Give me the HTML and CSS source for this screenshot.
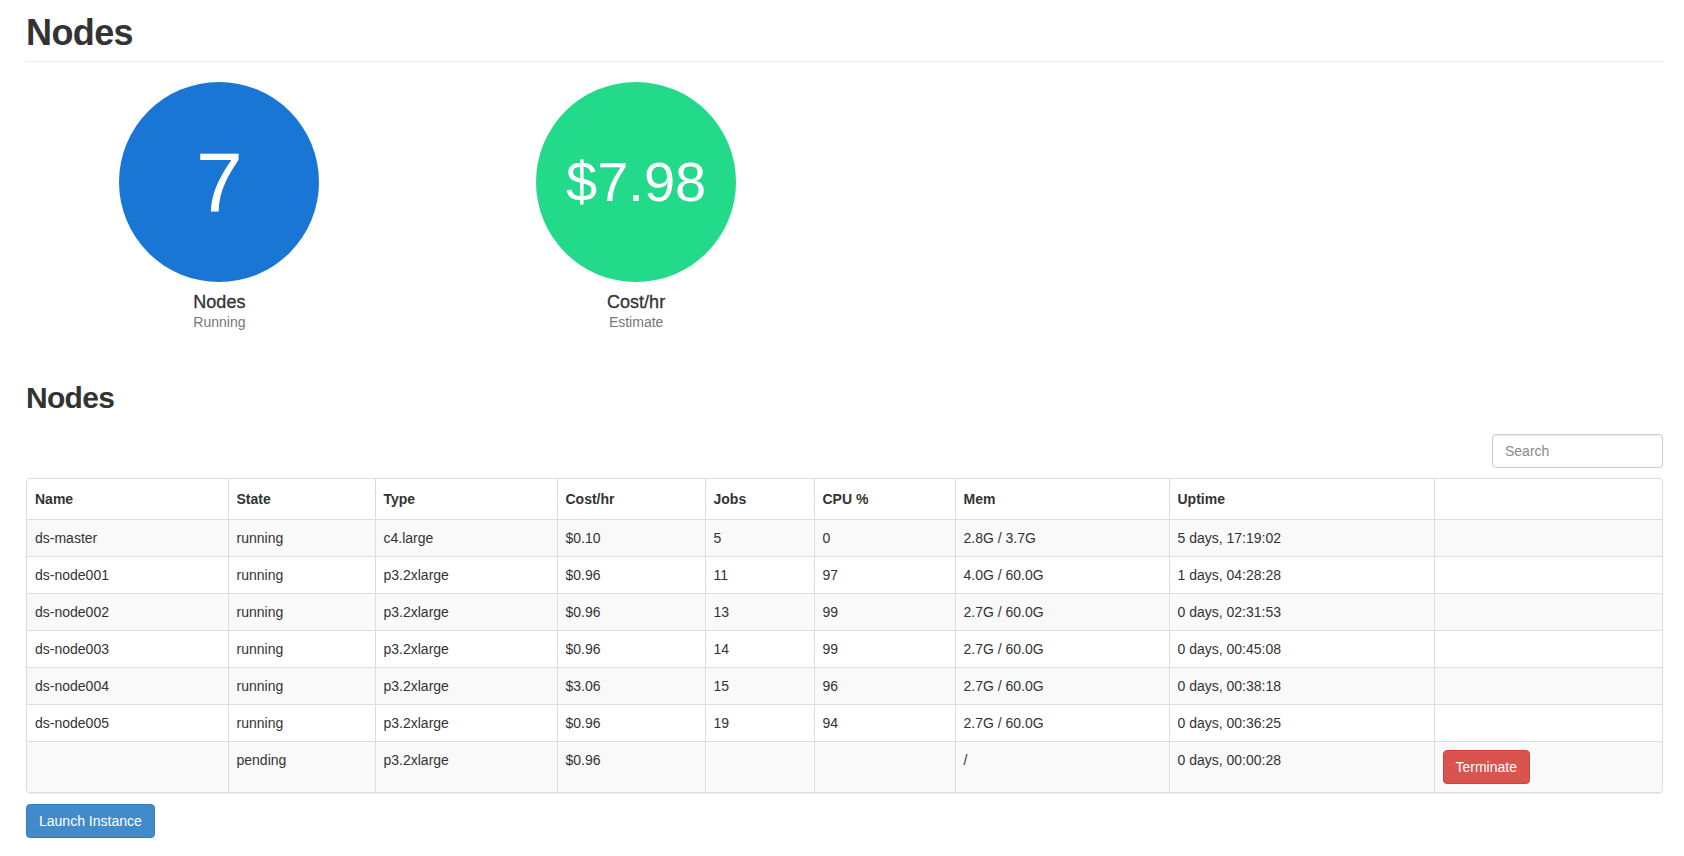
FILE: index.html
```html
<!DOCTYPE html>
<html lang="en">
<head>
<meta charset="utf-8">
<title>Nodes</title>
<link rel="stylesheet" href="styles.css">
</head>
<body>
<div class="page">
  <div class="page-header">
    <h1 class="page-title">Nodes</h1>
  </div>

  <div class="stats">
    <div class="stat">
      <div class="stat-circle stat-blue"><span class="stat-value stat-value-lg">7</span></div>
      <div class="stat-label">Nodes</div>
      <div class="stat-sub">Running</div>
    </div>
    <div class="stat">
      <div class="stat-circle stat-green"><span class="stat-value stat-value-md">$7.98</span></div>
      <div class="stat-label">Cost/hr</div>
      <div class="stat-sub">Estimate</div>
    </div>
  </div>

  <h2 class="section-title">Nodes</h2>

  <div class="toolbar">
    <input class="search" type="text" placeholder="Search">
  </div>

  <div class="table-wrap">
    <table class="nodes">
      <colgroup>
        <col class="c-name"><col class="c-state"><col class="c-type"><col class="c-cost"><col class="c-jobs"><col class="c-cpu"><col class="c-mem"><col class="c-uptime"><col class="c-action">
      </colgroup>
      <thead>
        <tr><th>Name</th><th>State</th><th>Type</th><th>Cost/hr</th><th>Jobs</th><th>CPU %</th><th>Mem</th><th>Uptime</th><th></th></tr>
      </thead>
      <tbody>
        <tr><td>ds-master</td><td>running</td><td>c4.large</td><td>$0.10</td><td>5</td><td>0</td><td>2.8G / 3.7G</td><td>5 days, 17:19:02</td><td></td></tr>
        <tr><td>ds-node001</td><td>running</td><td>p3.2xlarge</td><td>$0.96</td><td>11</td><td>97</td><td>4.0G / 60.0G</td><td>1 days, 04:28:28</td><td></td></tr>
        <tr><td>ds-node002</td><td>running</td><td>p3.2xlarge</td><td>$0.96</td><td>13</td><td>99</td><td>2.7G / 60.0G</td><td>0 days, 02:31:53</td><td></td></tr>
        <tr><td>ds-node003</td><td>running</td><td>p3.2xlarge</td><td>$0.96</td><td>14</td><td>99</td><td>2.7G / 60.0G</td><td>0 days, 00:45:08</td><td></td></tr>
        <tr><td>ds-node004</td><td>running</td><td>p3.2xlarge</td><td>$3.06</td><td>15</td><td>96</td><td>2.7G / 60.0G</td><td>0 days, 00:38:18</td><td></td></tr>
        <tr><td>ds-node005</td><td>running</td><td>p3.2xlarge</td><td>$0.96</td><td>19</td><td>94</td><td>2.7G / 60.0G</td><td>0 days, 00:36:25</td><td></td></tr>
        <tr><td></td><td>pending</td><td>p3.2xlarge</td><td>$0.96</td><td></td><td></td><td>/</td><td>0 days, 00:00:28</td><td><button class="btn btn-danger" type="button">Terminate</button></td></tr>
      </tbody>
    </table>
  </div>

  <button class="btn btn-primary launch" type="button">Launch Instance</button>
</div>
</body>
</html>
```

FILE: styles.css
```css
html, body {
  margin: 0;
  padding: 0;
  background: #fff;
}

body {
  font-family: "Liberation Sans", Helvetica, Arial, sans-serif;
  font-size: 14px;
  line-height: 20px;
  color: #333;
}

.page {
  padding: 0 21px 30px 26px;
}

.page-header {
  padding: 13px 0 8px;
  border-bottom: 1px solid #eee;
}

.page-title {
  margin: 0;
  font-size: 36px;
  line-height: 40px;
  font-weight: bold;
  letter-spacing: -0.6px;
}

.stats {
  display: grid;
  grid-template-columns: repeat(4, 1fr);
  column-gap: 30px;
  margin-top: 20px;
}

.stat {
  display: flex;
  flex-direction: column;
  align-items: center;
}

.stat-circle {
  width: 200px;
  height: 200px;
  border-radius: 50%;
  display: flex;
  align-items: center;
  justify-content: center;
  color: #fff;
}

.stat-blue {
  background: #1976d4;
}

.stat-green {
  background: #23da8a;
}

.stat-value {
  line-height: 1;
}

.stat-value-lg {
  font-size: 84px;
}

.stat-value-md {
  font-size: 56px;
}

.stat-label {
  margin-top: 10px;
  font-size: 18px;
  line-height: 20px;
  color: #333;
  -webkit-text-stroke: 0.3px #333;
}

.stat-sub {
  font-size: 14px;
  line-height: 20px;
  color: #777;
}

.section-title {
  margin: 49px 0 20px;
  font-size: 30px;
  line-height: 33px;
  font-weight: bold;
  letter-spacing: -0.7px;
}

.toolbar {
  display: flex;
  justify-content: flex-end;
  margin-bottom: 10px;
}

.search {
  box-sizing: border-box;
  width: 171px;
  height: 34px;
  padding: 6px 12px;
  border: 1px solid #ccc;
  border-radius: 4px;
  font-family: inherit;
  font-size: 14px;
  color: #555;
  box-shadow: inset 0 1px 1px rgba(0, 0, 0, 0.075);
  outline: none;
}

.search::placeholder {
  color: #8a8a8a;
}

.table-wrap {
  border: 1px solid #ddd;
  border-radius: 4px;
  overflow: hidden;
  box-shadow: 0 1px 1px rgba(0, 0, 0, 0.08);
}

.nodes {
  width: 100%;
  border-collapse: collapse;
  table-layout: fixed;
}

.c-name { width: 201px; }
.c-state { width: 147px; }
.c-type { width: 182px; }
.c-cost { width: 148px; }
.c-jobs { width: 109px; }
.c-cpu { width: 141px; }
.c-mem { width: 214px; }
.c-uptime { width: 265px; }
.c-action { width: auto; }

.nodes th,
.nodes td {
  text-align: left;
  vertical-align: top;
  padding: 8px;
  line-height: 20px;
  white-space: nowrap;
}

.nodes th {
  padding: 10px 8px;
  font-weight: bold;
}

.nodes th + th,
.nodes td + td {
  border-left: 1px solid #ddd;
}

.nodes tbody tr {
  border-top: 1px solid #ddd;
}

.nodes tbody tr:nth-child(odd) {
  background: #f9f9f9;
}

.btn {
  display: inline-block;
  box-sizing: border-box;
  height: 34px;
  padding: 6px 12px;
  border: 1px solid transparent;
  border-radius: 4px;
  font-family: inherit;
  font-size: 14px;
  line-height: 20px;
  color: #fff;
  cursor: pointer;
}

.btn-primary {
  background: #428bca;
  border-color: #357ebd;
}

.btn-danger {
  background: #d9534f;
  border-color: #d43f3a;
}

.launch {
  margin-top: 11px;
}
```
